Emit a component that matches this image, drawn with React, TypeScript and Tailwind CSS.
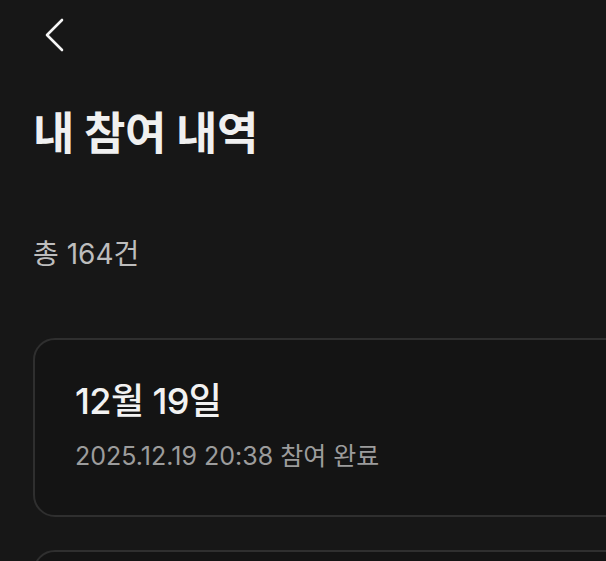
import React from "react";

const font = { fontFamily: '"Inter", "Noto Sans CJK KR", sans-serif' };

function Card({ title, sub }: { title?: string; sub?: string }) {
  return (
    <div className="w-[600px] shrink-0 rounded-[22px] border-2 border-[#2f2f2f] bg-[#141414] pl-[40px] pt-[39px] h-[179px]">
      {title && <div className="text-[36px] leading-[44px] text-[#f2f2f2] font-medium tracking-[-0.6px]">{title}</div>}
      {sub && <div className="mt-[18px] text-[25px] leading-[30px] text-[#9c9c9c]">{sub}</div>}
    </div>
  );
}

export default function App() {
  return (
    <div className="w-[606px] h-[561px] overflow-hidden bg-[#171717]" style={font}>
      <div className="pl-[44px] pt-[18px]">
        <svg width="22" height="34" viewBox="0 0 22 34" fill="none">
          <path d="M18 2 L3 17 L18 32" stroke="#f5f5f5" strokeWidth="2.6" strokeLinecap="round" strokeLinejoin="round" />
        </svg>
      </div>
      <div className="pl-[33px] mt-[54px] text-[45px] leading-[56px] font-bold text-[#f0f0f0] tracking-[-0.5px]">내 참여 내역</div>
      <div className="pl-[33px] mt-[75px] text-[28px] leading-[34px] text-[#bdbdbd]">총 164건</div>
      <div className="pl-[33px] mt-[67px] flex flex-col gap-[33px]">
        <Card title="12월 19일" sub="2025.12.19 20:38 참여 완료" />
        <Card />
      </div>
    </div>
  );
}
